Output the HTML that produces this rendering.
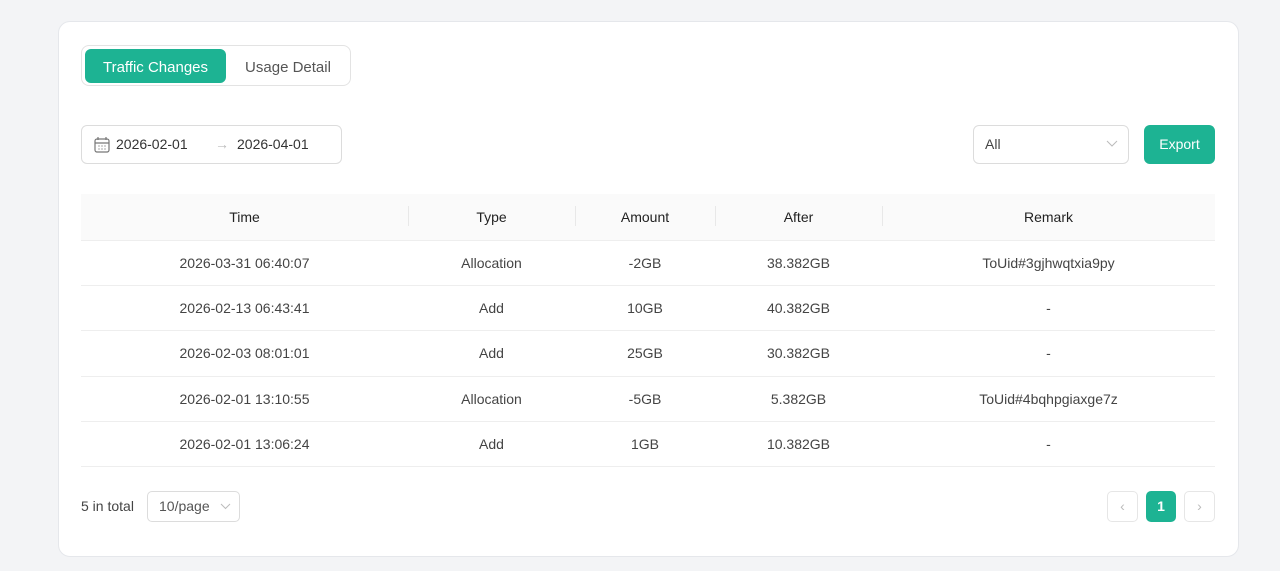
<!DOCTYPE html>
<html><head><meta charset="utf-8"><style>
*{box-sizing:border-box;margin:0;padding:0}
body{width:1280px;height:571px;background:#f3f4f6;font-family:"Liberation Sans",sans-serif;color:#333;font-size:14px;position:relative;overflow:hidden}
.card{position:absolute;left:58px;top:21px;width:1181px;height:536px;background:#fff;border:1px solid #e5e7eb;border-radius:12px}
.abs{position:absolute}
.seg{left:81px;top:45px;width:270px;height:41px;border:1px solid #e3e3e3;border-radius:8px}
.seg .on{position:absolute;left:3px;top:3px;width:141px;height:34px;background:#1db393;border-radius:6px;color:#fff;font-size:15px;line-height:38px;text-align:center}
.seg .off{position:absolute;left:144px;top:3px;width:124px;height:34px;color:#555;font-size:15px;line-height:38px;text-align:center}
.date{left:81px;top:125px;width:261px;height:39px;border:1px solid #dcdcdc;border-radius:6px;font-size:14px;line-height:37px}
.sel{left:973px;top:125px;width:156px;height:39px;border:1px solid #dcdcdc;border-radius:6px;line-height:37px;padding-left:11px;color:#444}
.btn{left:1144px;top:125px;width:71px;height:39px;background:#1db393;border-radius:6px;color:#fff;text-align:center;line-height:39px;font-size:14px}
table{position:absolute;left:81px;top:194px;width:1134px;border-collapse:collapse}
th{background:#fafafa;height:46px;font-weight:normal;color:#222;position:relative;border-bottom:1px solid #eee}
th+th:before{content:"";position:absolute;left:0;top:12px;height:20px;border-left:1px solid #e8e8e8}
td{height:45.4px;text-align:center;border-bottom:1px solid #eee;color:#444}
.pg{width:31px;height:31px;border:1px solid #e6e6e6;border-radius:5px;text-align:center;line-height:29px;color:#bbb}
</style></head><body>
<div class="card"></div>
<div class="abs seg"><div class="on">Traffic Changes</div><div class="off">Usage Detail</div></div>
<div class="abs date">
<svg class="abs" style="left:12px;top:10px" width="16" height="17" viewBox="0 0 16 17" fill="none" stroke="#777" stroke-width="1.2"><rect x="1" y="3" width="14" height="13" rx="2"/><path d="M4 1v3M12 1v3M1 7h14"/><path d="M4.5 10h1M7.5 10h1M10.5 10h1M4.5 13h1M7.5 13h1M10.5 13h1"/></svg>
<span class="abs" style="left:34px">2026-02-01</span>
<span class="abs" style="left:133px;color:#bbb">→</span>
<span class="abs" style="left:155px">2026-04-01</span>
</div>
<div class="abs sel">All<svg class="abs" style="left:132px;top:14px" width="12" height="8" viewBox="0 0 12 8" fill="none" stroke="#bbb"><path d="M1 1l5 5 5-5"/></svg></div>
<div class="abs btn">Export</div>
<table>
<tr><th style="width:327px">Time</th><th style="width:167px">Type</th><th style="width:140px">Amount</th><th style="width:167px">After</th><th>Remark</th></tr>
<tr><td>2026-03-31 06:40:07</td><td>Allocation</td><td>-2GB</td><td>38.382GB</td><td>ToUid#3gjhwqtxia9py</td></tr>
<tr><td>2026-02-13 06:43:41</td><td>Add</td><td>10GB</td><td>40.382GB</td><td>-</td></tr>
<tr><td>2026-02-03 08:01:01</td><td>Add</td><td>25GB</td><td>30.382GB</td><td>-</td></tr>
<tr><td>2026-02-01 13:10:55</td><td>Allocation</td><td>-5GB</td><td>5.382GB</td><td>ToUid#4bqhpgiaxge7z</td></tr>
<tr><td>2026-02-01 13:06:24</td><td>Add</td><td>1GB</td><td>10.382GB</td><td>-</td></tr>
</table>
<div class="abs" style="left:81px;top:498px;color:#444">5 in total</div>
<div class="abs" style="left:147px;top:491px;width:93px;height:31px;border:1px solid #dcdcdc;border-radius:5px;line-height:29px;padding-left:11px;color:#555">10/page<svg class="abs" style="left:72px;top:11px" width="11" height="7" viewBox="0 0 11 7" fill="none" stroke="#bbb"><path d="M1 1l4.5 4.5L10 1"/></svg></div>
<div class="abs pg" style="left:1107px;top:491px">‹</div>
<div class="abs pg" style="left:1146px;top:491px;width:30px;background:#1db393;border-color:#1db393;color:#fff;font-weight:bold">1</div>
<div class="abs pg" style="left:1184px;top:491px">›</div>
</body></html>
